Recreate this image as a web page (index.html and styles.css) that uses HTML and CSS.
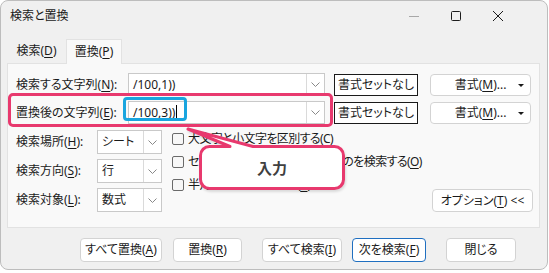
FILE: index.html
```html
<!DOCTYPE html>
<html lang="ja">
<head>
<meta charset="utf-8">
<title>検索と置換</title>
<link rel="stylesheet" href="styles.css">
</head>
<body>
<div class="window">
  <div class="titlebar">
    <span class="title">検索と置換</span>
    <div class="caption">
      <span class="cap"><svg width="12" height="12" viewBox="0 0 12 12"><line x1="1" y1="6.5" x2="11" y2="6.5" stroke="#a8a8a8" stroke-width="1"/></svg></span>
      <span class="cap"><svg width="12" height="12" viewBox="0 0 12 12"><rect x="1.5" y="1.5" width="9" height="9" rx="1" fill="none" stroke="#1c1c1c" stroke-width="1"/></svg></span>
      <span class="cap"><svg width="12" height="12" viewBox="0 0 12 12"><path d="M1 1 L11 11 M11 1 L1 11" stroke="#1c1c1c" stroke-width="1"/></svg></span>
    </div>
  </div>

  <div class="tabs">
    <div class="tab">検索(<u>D</u>)</div>
    <div class="tab active">置換(<u>P</u>)</div>
  </div>

  <div class="panel">
    <div class="row">
      <span class="lbl">検索する文字列(<u>N</u>):</span>
      <div class="combo wide">
        <span class="val">/100,1))</span>
        <span class="drop"><svg width="9" height="5" viewBox="0 0 9 5"><polyline points="0.5,0.5 4.5,4.5 8.5,0.5" fill="none" stroke="#888" stroke-width="1"/></svg></span>
      </div>
      <button class="btn-none">書式セットなし</button>
      <button class="btn btn-fmt"><span>書式(<u>M</u>)...</span><span class="tri"></span></button>
    </div>
    <div class="row">
      <span class="lbl">置換後の文字列(<u>E</u>):</span>
      <div class="combo wide">
        <span class="val">/100,3))<span class="caret"></span></span>
        <span class="drop"><svg width="9" height="5" viewBox="0 0 9 5"><polyline points="0.5,0.5 4.5,4.5 8.5,0.5" fill="none" stroke="#888" stroke-width="1"/></svg></span>
      </div>
      <button class="btn-none">書式セットなし</button>
      <button class="btn btn-fmt"><span>書式(<u>M</u>)...</span><span class="tri"></span></button>
    </div>

    <div class="lower">
      <div class="selects">
        <div class="srow">
          <span class="slbl">検索場所(<u>H</u>):</span>
          <div class="combo small"><span class="val">シート</span><span class="drop"><svg width="9" height="5" viewBox="0 0 9 5"><polyline points="0.5,0.5 4.5,4.5 8.5,0.5" fill="none" stroke="#888" stroke-width="1"/></svg></span></div>
        </div>
        <div class="srow">
          <span class="slbl">検索方向(<u>S</u>):</span>
          <div class="combo small"><span class="val">行</span><span class="drop"><svg width="9" height="5" viewBox="0 0 9 5"><polyline points="0.5,0.5 4.5,4.5 8.5,0.5" fill="none" stroke="#888" stroke-width="1"/></svg></span></div>
        </div>
        <div class="srow">
          <span class="slbl">検索対象(<u>L</u>):</span>
          <div class="combo small"><span class="val">数式</span><span class="drop"><svg width="9" height="5" viewBox="0 0 9 5"><polyline points="0.5,0.5 4.5,4.5 8.5,0.5" fill="none" stroke="#888" stroke-width="1"/></svg></span></div>
        </div>
      </div>
      <div class="checks">
        <div class="crow"><span class="box"></span><span class="ctext">大文字と小文字を区別する(<u>C</u>)</span></div>
        <div class="crow"><span class="box"></span><span class="ctext">セル内容が完全に同一であるものを検索する(<u>O</u>)</span></div>
        <div class="crow"><span class="box"></span><span class="ctext">半角と全角を区別する(<u>B</u>)</span></div>
      </div>
      <div class="opt">
        <button class="btn btn-opt">オプション(<u>T</u>) &lt;&lt;</button>
      </div>
    </div>
  </div>

  <div class="footer">
    <button class="btn fb b1">すべて置換(<u>A</u>)</button>
    <button class="btn fb b2">置換(<u>R</u>)</button>
    <button class="btn fb b3">すべて検索(<u>I</u>)</button>
    <button class="btn fb b4 default">次を検索(<u>F</u>)</button>
    <button class="btn fb b5">閉じる</button>
  </div>

  <div class="hl-pink"></div>
  <div class="hl-blue"></div>
  <svg class="callout" width="165" height="72" viewBox="0 0 165 72">
    <path d="M24.5 20.5 H45 L3 3 L68 20.5 H149.5 A9 9 0 0 1 158.5 29.5 V53.5 A9 9 0 0 1 149.5 62.5 H24.5 A9 9 0 0 1 15.5 53.5 V29.5 A9 9 0 0 1 24.5 20.5 Z" fill="#ffffff" stroke="#e8396e" stroke-width="3" stroke-linejoin="round"/>
  </svg>
  <div class="callout-text">入力</div>
</div>
</body>
</html>
```

FILE: styles.css
```css
* { box-sizing: border-box; }

html, body {
  margin: 0;
  padding: 0;
  background: #ffffff;
}

body {
  font-family: "Noto Sans", "Noto Sans CJK JP", sans-serif;
  font-size: 12px;
  font-feature-settings: "palt";
  color: #1a1a1a;
}

u { text-decoration-thickness: 1px; text-underline-offset: 2px; }

.window {
  position: relative;
  width: 548px;
  height: 270px;
  border: 1px solid #bdbdbd;
  border-radius: 8px;
  background: #f0f0f0;
  overflow: hidden;
  display: flex;
  flex-direction: column;
}

.titlebar {
  height: 29px;
  display: flex;
  align-items: center;
  padding-left: 9px;
  flex: none;
}

.title { line-height: 1; }

.caption {
  margin-left: auto;
  display: flex;
  margin-right: 28px;
}

.cap {
  width: 42px;
  height: 29px;
  display: flex;
  align-items: center;
  justify-content: center;
}

.tabs {
  margin-top: 9px;
  margin-left: 6px;
  display: flex;
  height: 24px;
  flex: none;
  position: relative;
  z-index: 1;
}

.tab {
  display: flex;
  align-items: center;
  justify-content: center;
  line-height: 1;
  width: 59px;
  height: 24px;
}

.tab.active {
  width: 56px;
  background: #f9f9f9;
  border: 1px solid #e2e2e2;
  border-bottom: none;
  height: 25px;
}

.panel {
  margin-left: 6px;
  width: 533px;
  height: 165px;
  background: #f9f9f9;
  border: 1px solid #e2e2e2;
  padding: 9px 6px 0 8px;
  flex: none;
}

.row {
  display: flex;
  align-items: center;
  height: 23px;
  margin-bottom: 5px;
}

.lbl {
  width: 112px;
  line-height: 1;
  flex: none;
  white-space: nowrap;
}

.combo {
  display: flex;
  align-items: stretch;
  background: #ffffff;
  border: 1px solid #c9c9c9;
  flex: none;
}

.combo.wide { width: 197px; height: 23px; }
.combo.small { width: 65px; height: 24px; }

.val {
  flex: 1;
  display: flex;
  align-items: center;
  padding-left: 4px;
  line-height: 1;
  white-space: nowrap;
}

.caret {
  display: inline-block;
  width: 1px;
  height: 16px;
  background: #000;
  margin-left: 1px;
}

.drop {
  width: 18px;
  border-left: 1px solid #dadada;
  display: flex;
  align-items: center;
  justify-content: center;
  flex: none;
}

.btn-none {
  margin-left: 9px;
  width: 84px;
  height: 22px;
  border: 1px solid #1a1a1a;
  background: #ffffff;
  font: inherit;
  color: inherit;
  padding: 0;
  line-height: 1;
  flex: none;
}

.btn {
  font: inherit;
  color: inherit;
  background: #ffffff;
  border: 1px solid #d3d3d3;
  border-radius: 4px;
  padding: 0;
  line-height: 1;
  display: flex;
  align-items: center;
  justify-content: center;
  flex: none;
  white-space: nowrap;
}

.btn-fmt {
  margin-left: 12px;
  width: 101px;
  height: 22px;
  position: relative;
}

.tri {
  position: absolute;
  right: 6px;
  top: 9px;
  width: 0;
  height: 0;
  border-left: 3px solid transparent;
  border-right: 3px solid transparent;
  border-top: 3px solid #1a1a1a;
}

.lower {
  display: flex;
  margin-top: 6px;
}

.selects {
  display: flex;
  flex-direction: column;
  gap: 5px;
}

.srow {
  display: flex;
  align-items: center;
  height: 24px;
}

.slbl {
  width: 81px;
  line-height: 1;
  white-space: nowrap;
}

.checks {
  margin-left: 10px;
  display: flex;
  flex-direction: column;
  gap: 5px;
}

.crow {
  display: flex;
  align-items: center;
  height: 18px;
  line-height: 1;
  white-space: nowrap;
}

.ctext { letter-spacing: -0.6px; }

.box {
  width: 12px;
  height: 12px;
  border: 1px solid #6a6a6a;
  border-radius: 2px;
  background: #f7f7f7;
  margin-right: 4px;
  flex: none;
}

.opt {
  margin-left: auto;
  display: flex;
  align-items: flex-end;
}

.btn-opt {
  width: 101px;
  height: 23px;
}

.footer {
  display: flex;
  margin-top: 10px;
  height: 24px;
  flex: none;
}

.fb { height: 24px; }
.b1 { margin-left: 79px; width: 82px; }
.b2 { margin-left: 11px; width: 69px; }
.b3 { margin-left: 20px; width: 80px; }
.b4 { margin-left: 10px; width: 74px; }
.b5 { margin-left: 20px; width: 70px; }

.default { border: 1px solid #1f6fc0; }

.hl-pink {
  position: absolute;
  left: 7px;
  top: 92px;
  width: 325px;
  height: 34px;
  border: 3px solid #e8396e;
  border-radius: 5px;
  z-index: 2;
}

.hl-blue {
  position: absolute;
  left: 122px;
  top: 96px;
  width: 64px;
  height: 24px;
  border: 3px solid #19a5df;
  border-radius: 4px;
  z-index: 2;
}

.callout {
  position: absolute;
  left: 184px;
  top: 125px;
  z-index: 3;
  filter: drop-shadow(1px 2px 1px rgba(0, 0, 0, 0.12));
}

.callout-text {
  position: absolute;
  left: 198px;
  top: 145px;
  width: 146px;
  height: 44px;
  display: flex;
  align-items: center;
  justify-content: center;
  font-size: 15px;
  font-weight: bold;
  color: #404040;
  line-height: 1;
  z-index: 4;
}
```
